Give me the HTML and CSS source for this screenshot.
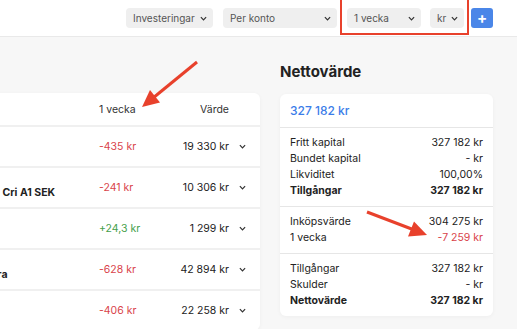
FILE: index.html
```html
<!DOCTYPE html>
<html lang="sv">
<head>
  <meta charset="UTF-8">
  <title>Nettovärde</title>
  <link rel="stylesheet" href="styles.css">
</head>
<body>

  <header class="topbar">
    <div class="select sel-type">Investeringar <svg class="chev" viewBox="0 0 8 5"><path d="M1 1l3 3 3-3"/></svg></div>
    <div class="select sel-group">Per konto <svg class="chev" viewBox="0 0 8 5"><path d="M1 1l3 3 3-3"/></svg></div>
    <div class="select sel-period">1 vecka <svg class="chev" viewBox="0 0 8 5"><path d="M1 1l3 3 3-3"/></svg></div>
    <div class="select sel-unit">kr <svg class="chev" viewBox="0 0 8 5"><path d="M1 1l3 3 3-3"/></svg></div>
    <button class="add-btn">+</button>
    <div class="mark-box"></div>
  </header>

  <main class="main">
    <section class="holdings">
      <div class="row head">
        <div></div>
        <div>1 vecka</div>
        <div class="num">Värde</div>
        <div></div>
      </div>
      <div class="row">
        <div class="name"><span class="acc">ISK</span><b>Avanza Zero</b></div>
        <div class="neg">-435 kr</div>
        <div class="num">19 330 kr</div>
        <div class="more"><svg class="chev" viewBox="0 0 8 5"><path d="M1 1l3 3 3-3"/></svg></div>
      </div>
      <div class="row">
        <div class="name"><span class="acc">ISK</span><b>Handelsbanken Global Ind Cri A1 SEK</b></div>
        <div class="neg">-241 kr</div>
        <div class="num">10 306 kr</div>
        <div class="more"><svg class="chev" viewBox="0 0 8 5"><path d="M1 1l3 3 3-3"/></svg></div>
      </div>
      <div class="row">
        <div class="name"><span class="acc">KF</span><b>Bitcoin Tracker</b></div>
        <div class="pos">+24,3 kr</div>
        <div class="num">1 299 kr</div>
        <div class="more"><svg class="chev" viewBox="0 0 8 5"><path d="M1 1l3 3 3-3"/></svg></div>
      </div>
      <div class="row">
        <div class="name"><span class="acc">ISK</span><b>Länsförsäkringar Indexnära</b></div>
        <div class="neg">-628 kr</div>
        <div class="num">42 894 kr</div>
        <div class="more"><svg class="chev" viewBox="0 0 8 5"><path d="M1 1l3 3 3-3"/></svg></div>
      </div>
      <div class="row">
        <div class="name"><span class="acc">TJP</span><b>Avanza Global</b></div>
        <div class="neg">-406 kr</div>
        <div class="num">22 258 kr</div>
        <div class="more"><svg class="chev" viewBox="0 0 8 5"><path d="M1 1l3 3 3-3"/></svg></div>
      </div>
    </section>

    <aside class="summary">
      <h2>Nettovärde</h2>
      <div class="card">
        <div class="total">327 182 kr</div>
        <div class="group">
          <div class="line"><span>Fritt kapital</span><span>327 182 kr</span></div>
          <div class="line"><span>Bundet kapital</span><span>- kr</span></div>
          <div class="line"><span>Likviditet</span><span>100,00%</span></div>
          <div class="line strong"><span>Tillgångar</span><span>327 182 kr</span></div>
        </div>
        <div class="group">
          <div class="line"><span>Inköpsvärde</span><span>304 275 kr</span></div>
          <div class="line"><span>1 vecka</span><span class="neg">-7 259 kr</span></div>
        </div>
        <div class="group">
          <div class="line"><span>Tillgångar</span><span>327 182 kr</span></div>
          <div class="line"><span>Skulder</span><span>- kr</span></div>
          <div class="line strong"><span>Nettovärde</span><span>327 182 kr</span></div>
        </div>
      </div>
    </aside>
  </main>

  <!-- annotation arrows -->
  <svg class="arrows" width="517" height="329">
    <line x1="197" y1="62" x2="153" y2="98" />
    <polygon points="142,107 160,102.5 150,90" />
    <line x1="367" y1="212" x2="413" y2="229.5" />
    <polygon points="427,235 414,221.5 408,236.5" />
  </svg>

</body>
</html>
```

FILE: styles.css
```css
* {
  box-sizing: border-box;
  margin: 0;
  padding: 0;
}

body {
  font-family: 'Inter', 'Liberation Sans', sans-serif;
  font-size: 10px;
  background-color: #f7f7f7;
  color: #222;
  overflow: hidden;
  position: relative;
  width: 517px;
  height: 329px;
}

.topbar {
  position: relative;
  height: 37px;
  background-color: #fff;
  border-bottom: 1px solid #e9e9e9;
  display: flex;
  align-items: center;
  padding: 0 24px 0 0;
  justify-content: flex-end;
}

.select {
  height: 20px;
  background-color: #efefef;
  border-radius: 4px;
  color: #555;
  font-size: 10px;
  display: flex;
  align-items: center;
  justify-content: space-between;
  padding: 0 6px 0 7px;
}

.chev {
  width: 7px;
  height: 5px;
  fill: none;
  stroke: #333;
  stroke-width: 1.4;
}

.sel-type { width: 87px; margin-right: 10px; }
.sel-group { width: 114px; margin-right: 10px; }
.sel-period { width: 74px; margin-right: 9px; }
.sel-unit { width: 34px; margin-right: 7px; }

.add-btn {
  width: 22px;
  height: 20px;
  border: none;
  border-radius: 3px;
  background-color: #4a86e8;
  color: #fff;
  font-family: inherit;
  font-size: 15px;
  font-weight: 700;
  line-height: 20px;
}

.mark-box {
  position: absolute;
  left: 340px;
  top: -3px;
  width: 129px;
  height: 38px;
  border: 2px solid #e8412c;
}

.main {
  display: grid;
  grid-template-columns: 410px 213px;
  column-gap: 20px;
  align-items: start;
  margin-left: -150px;
  padding-top: 25px;
}

.holdings {
  margin-top: 31px;
  background: #fff;
  border-radius: 6px;
  box-shadow: 0 1px 4px rgba(0, 0, 0, 0.04);
}

.row {
  display: grid;
  grid-template-columns: 1fr 61px 69px 17px;
  align-items: center;
  height: 41px;
  padding: 0 14px 0 16px;
  border-top: 2px solid #f0f0f0;
  font-size: 10.5px;
}

.row.head {
  height: 32px;
  border-top: none;
  color: #333;
}

.num {
  text-align: right;
}

.name {
  display: flex;
  flex-direction: column;
  white-space: nowrap;
}

.name .acc {
  font-size: 9px;
  line-height: 11px;
  color: #888;
}

.name b {
  font-size: 10.5px;
  line-height: 14px;
  font-weight: 700;
}

.more {
  display: flex;
  justify-content: flex-end;
}

.neg { color: #d9434a; }
.pos { color: #45a04b; }

.summary h2 {
  font-size: 15px;
  line-height: 20px;
  font-weight: 700;
  margin-bottom: 12px;
}

.card {
  background: #fff;
  border-radius: 6px;
  box-shadow: 0 1px 4px rgba(0, 0, 0, 0.04);
}

.total {
  color: #3b7de9;
  font-size: 12px;
  font-weight: 500;
  line-height: 17px;
  padding: 8px 10px;
  border-bottom: 1px solid #e6e6e6;
}

.group {
  padding: 7px 10px;
  border-bottom: 1px solid #e6e6e6;
}

.group:last-child {
  border-bottom: none;
}

.line {
  display: flex;
  justify-content: space-between;
  line-height: 16px;
  font-size: 10.5px;
}

.line.strong {
  font-weight: 700;
}

.arrows {
  position: absolute;
  left: 0;
  top: 0;
  pointer-events: none;
}

.arrows line {
  stroke: #e8412c;
  stroke-width: 3;
}

.arrows polygon {
  fill: #e8412c;
}
```
